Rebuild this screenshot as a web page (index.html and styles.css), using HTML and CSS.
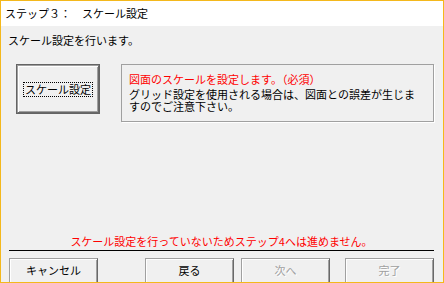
FILE: index.html
```html
<!DOCTYPE html>
<html lang="ja">
<head>
    <meta charset="UTF-8">
    <title>スケール設定</title>
    <link rel="stylesheet" href="styles.css">
</head>
<body>
    <div class="window">
        <div class="header">ステップ３：　スケール設定</div>
        <div class="content">
            <div class="intro">スケール設定を行います。</div>
            <div class="row">
                <button class="big-button"><span class="focus">スケール設定</span></button>
                <div class="info-box">
                    <div class="info-title">図面のスケールを設定します。（必須）</div>
                    <div class="info-text">グリッド設定を使用される場合は、図面との誤差が生じま<br>すのでご注意下さい。</div>
                </div>
            </div>
            <div class="footer">
                <div class="status">スケール設定を行っていないためステップ4へは進めません。</div>
                <div class="separator"></div>
                <div class="buttons">
                    <button class="btn">キャンセル</button>
                    <button class="btn back">戻る</button>
                    <button class="btn next" disabled>次へ</button>
                    <button class="btn done" disabled>完了</button>
                </div>
            </div>
        </div>
    </div>
</body>
</html>
```

FILE: styles.css
```css
body {
    margin: 0;
    font-family: "Noto Sans CJK JP", "DejaVu Sans", sans-serif;
    font-size: 11px;
    color: #000;
}
.window {
    width: 444px;
    height: 283px;
    box-sizing: border-box;
    border: 1px solid #f4b81c;
    display: flex;
    flex-direction: column;
    overflow: hidden;
}
.header {
    background: #fff;
    height: 25px;
    line-height: 25px;
    padding-left: 4px;
    flex-shrink: 0;
}
.content {
    flex: 1;
    background: #f0f0f0;
    display: flex;
    flex-direction: column;
    padding-top: 8px;
}
.intro {
    line-height: 13px;
    padding-left: 7px;
}
.row {
    display: flex;
    align-items: flex-start;
    margin-top: 17px;
    padding-left: 16px;
}
.big-button {
    width: 82px;
    height: 48px;
    margin-top: 1px;
    background: #f0f0f0;
    font-family: inherit;
    font-size: 11px;
    border: 1px solid;
    border-color: #a0a0a0 #696969 #696969 #a0a0a0;
    box-shadow: inset 1px 1px #fff, inset -1px -1px #a0a0a0, 0 0 0 1px #646464;
    padding: 0;
    display: flex;
    align-items: center;
    justify-content: center;
}
.focus {
    border: 1px dotted #000;
    line-height: 13px;
    padding: 0 1px;
}
.info-box {
    width: 304px;
    height: 48px;
    margin-left: 22px;
    border: 1px solid #a0a0a0;
    box-shadow: 1px 1px 0 #fff;
    padding: 8px 0 0 7px;
}
.info-title {
    color: #ff0000;
    line-height: 12px;
}
.info-text {
    margin-top: 3px;
    line-height: 12px;
}
.footer {
    margin-top: auto;
    padding: 0 9px 0 8px;
}
.status {
    color: #ff0000;
    text-align: center;
    line-height: 13px;
}
.separator {
    height: 1px;
    background: #000;
    margin-top: 2px;
}
.buttons {
    display: flex;
    height: 24px;
    margin-top: 7px;
    overflow: hidden;
}
.btn {
    width: 89px;
    height: 26px;
    flex-shrink: 0;
    background: #f0f0f0;
    font-family: inherit;
    font-size: 11px;
    color: #000;
    border: 1px solid;
    border-color: #a0a0a0 #696969 #696969 #a0a0a0;
    box-shadow: inset 1px 1px #fff, inset -1px -1px #a0a0a0;
    padding: 0 0 2px;
}
.btn:disabled {
    color: #a0a0a0;
    text-shadow: 1px 1px 0 #fff;
}
.back {
    margin-left: 47px;
}
.next {
    margin-left: 7px;
}
.done {
    margin-left: 15px;
}
```
